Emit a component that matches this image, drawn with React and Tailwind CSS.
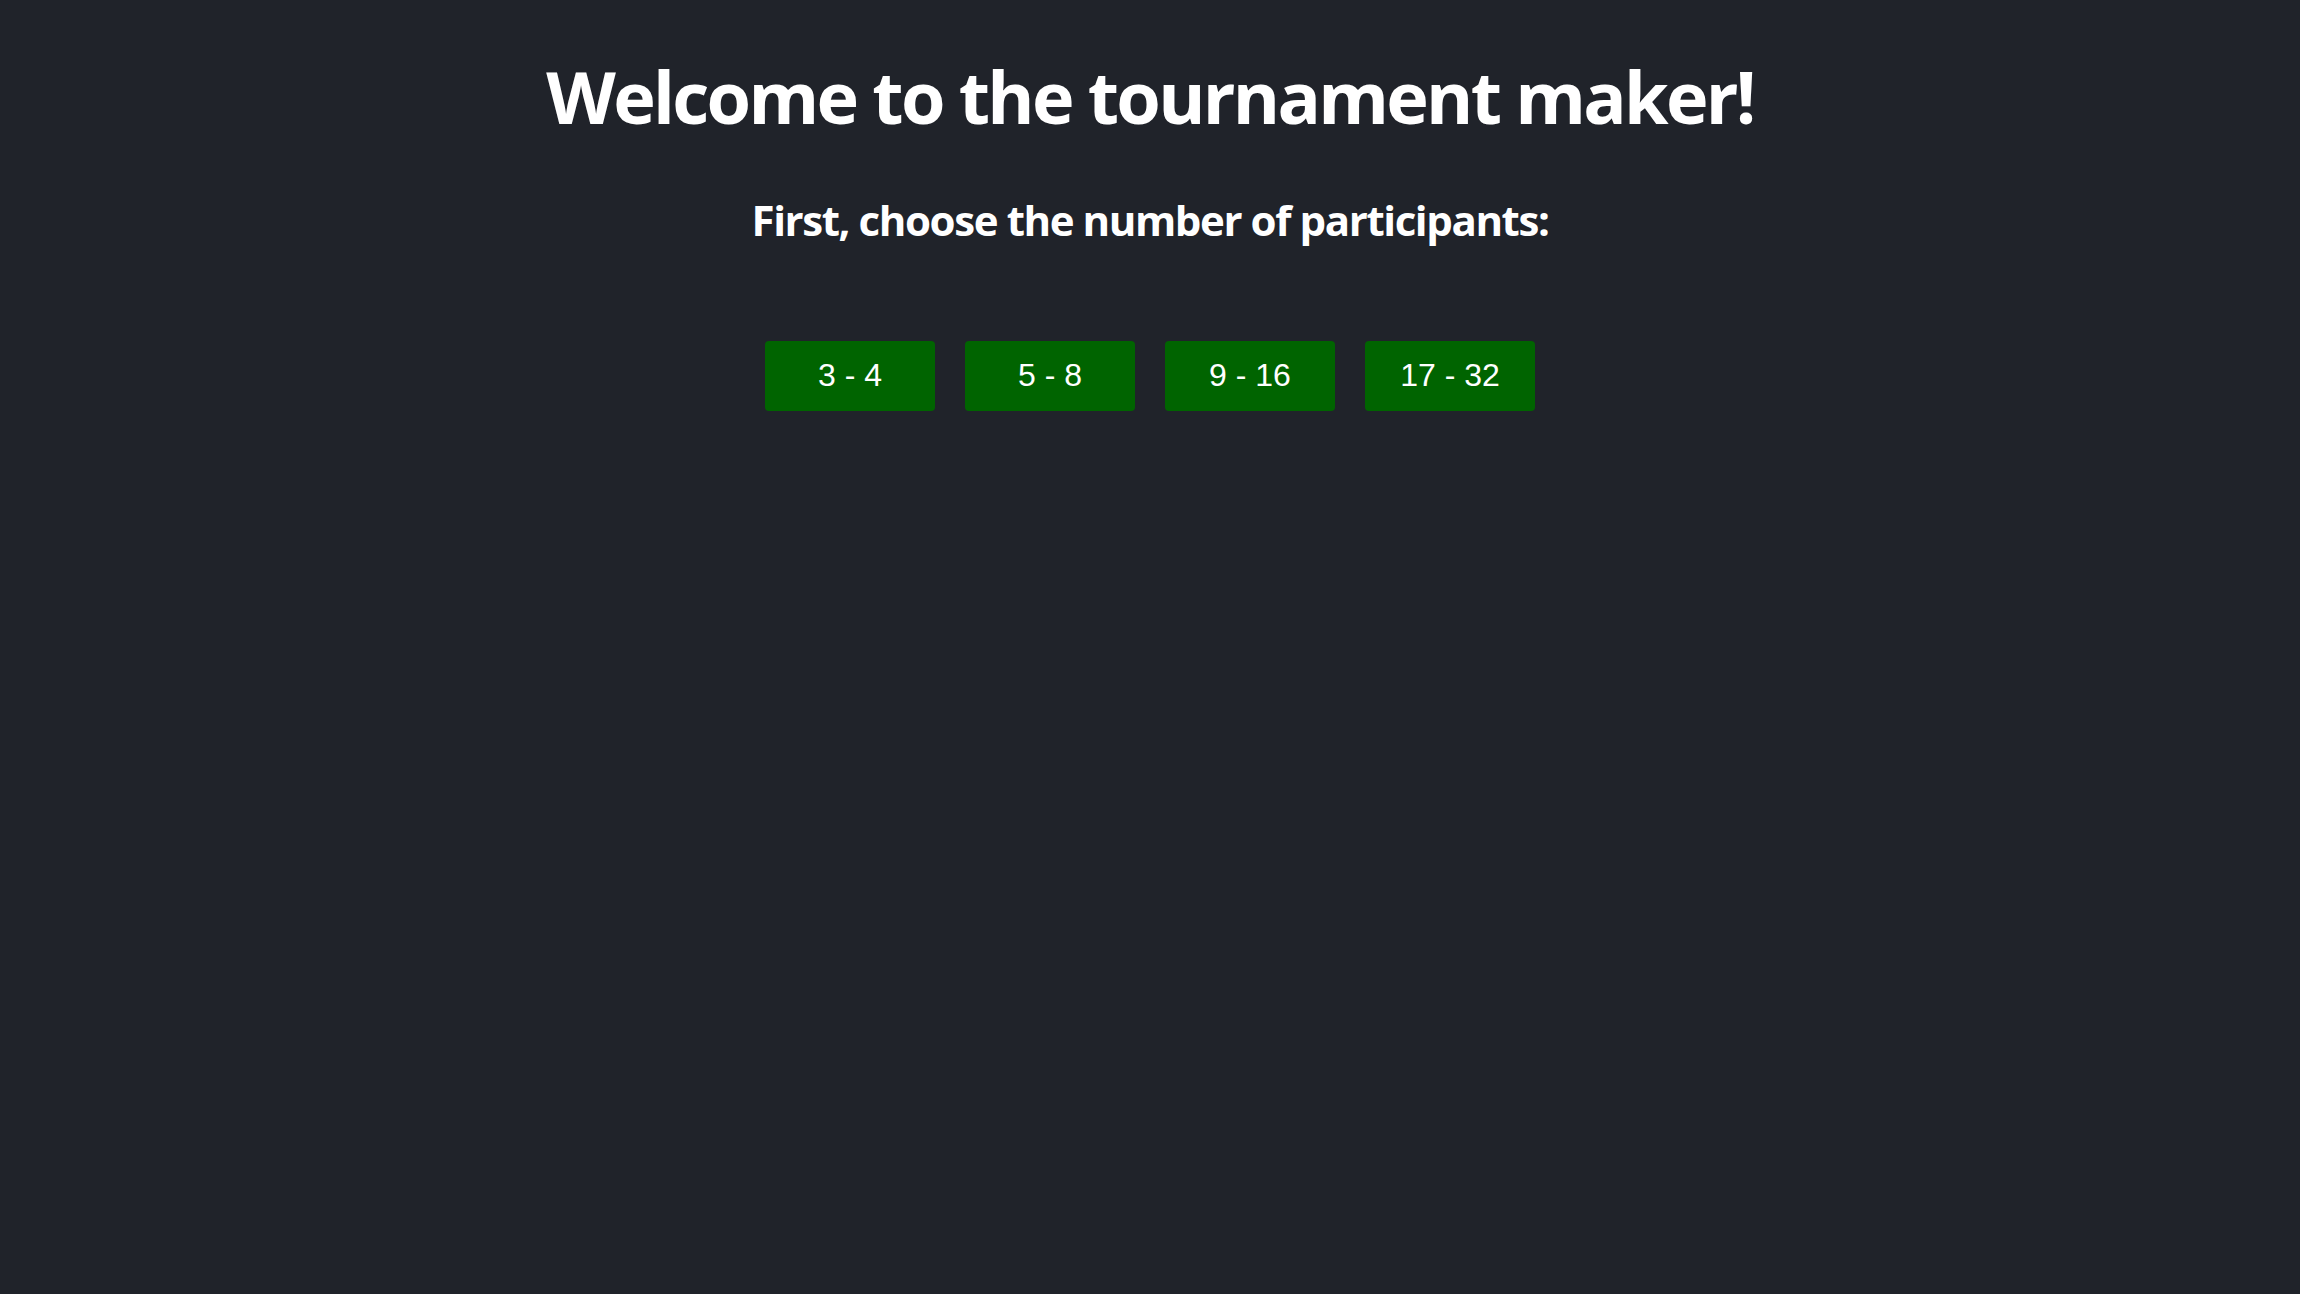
const RANGES = ['3 - 4', '5 - 8', '9 - 16', '17 - 32'];

export default function App() {
  return (
    <div className="min-h-screen w-full bg-[#20232a] text-white flex flex-col items-center">
      <h1 className="mt-[60px] text-[72px] leading-none font-bold tracking-[-2.7px] font-['Open_Sans',sans-serif]">
        Welcome to the tournament maker!
      </h1>
      <h3 className="mt-[67px] text-[42px] leading-none font-bold tracking-[-1.4px] font-['Open_Sans',sans-serif]">
        First, choose the number of participants:
      </h3>
      <div className="mt-[100px] flex gap-[30px]">
        {RANGES.map((r) => (
          <button
            key={r}
            className="w-[170px] h-[70px] pb-[2px] rounded-[4px] bg-[#006400] text-white text-[32px] font-['Liberation_Sans',Arial,sans-serif] cursor-pointer"
          >
            {r}
          </button>
        ))}
      </div>
    </div>
  );
}
